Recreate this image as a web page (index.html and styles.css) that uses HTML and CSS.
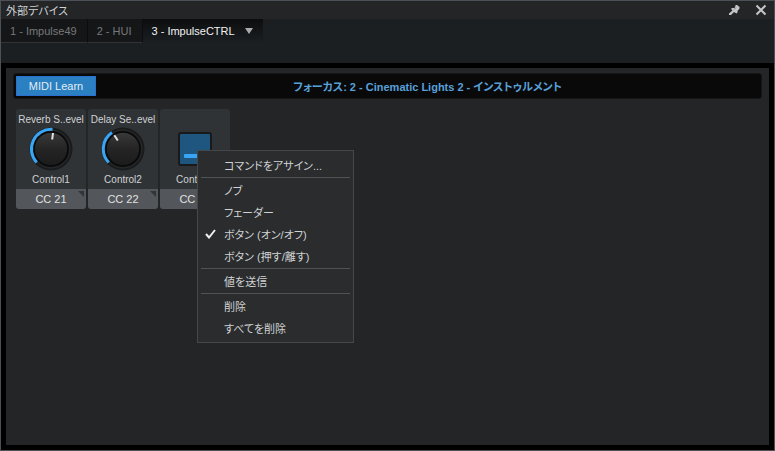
FILE: index.html
```html
<!DOCTYPE html>
<html lang="ja">
<head>
    <meta charset="UTF-8">
    <meta name="viewport" content="width=device-width, initial-scale=1.0">
    <title>外部デバイス</title>
    <link rel="stylesheet" href="styles.css">
</head>
<body>
    <div class="window">
        <header class="title-bar">
            <h1>外部デバイス</h1>
            <button class="icon-btn" aria-label="Pin">
                <svg width="12" height="12" viewBox="0 0 12 12">
                    <path d="M7.500 1H9l2.500 2v1.500L9.500 7v1.500L8.500 9.500 6 8 3 11H1v-1.500L4.500 6.500 3 5l1-1h2.500L7.500 2z" fill="#c4c6c8"/>
                    <path d="M6 5.500L8 3.500" stroke="#77797b" stroke-width="1"/>
                </svg>
            </button>
            <button class="icon-btn" aria-label="Close">
                <svg width="12" height="12" viewBox="0 0 12 12">
                    <path d="M1.500 1.500l9 9M10.500 1.500l-9 9" stroke="#c4c6c8" stroke-width="2"/>
                </svg>
            </button>
        </header>

        <nav class="tabs">
            <button class="tab">1 - Impulse49</button>
            <button class="tab">2 - HUI</button>
            <button class="tab active">3 - ImpulseCTRL
                <svg width="8" height="6" viewBox="0 0 8 6"><path d="M0 0h8L4 6z" fill="#a9abad"/></svg>
            </button>
        </nav>

        <main class="panel">
            <div class="focus-bar">
                <button class="learn-btn">MIDI Learn</button>
                <p class="focus-text">フォーカス: 2 - Cinematic Lights 2 - インストゥルメント</p>
            </div>

            <div class="controls">
                <div class="control">
                    <span class="param">Reverb S..evel</span>
                    <div class="knob">
                        <svg width="44" height="44" viewBox="-22 -22 44 44">
                            <defs>
                                <linearGradient id="cap" x1="0" y1="0" x2="0" y2="1">
                                    <stop offset="0" stop-color="#3a3a3a"/>
                                    <stop offset="0.500" stop-color="#242424"/>
                                    <stop offset="1" stop-color="#1b1b1b"/>
                                </linearGradient>
                            </defs>
                            <circle r="21.500" fill="#1a1b1c"/>
                            <circle r="19" fill="none" stroke="#2a2b2c"/>
                            <circle r="17" fill="url(#cap)" stroke="#080808" stroke-width="1.500"/>
                            <path d="M-14.300 13.500A19.700 19.700 0 0 1 1.500 -19.600" fill="none" stroke="#38a5f5" stroke-width="3"/>
                            <path d="M2 -16L1.200 -9.500" stroke="#e4e4e4" stroke-width="2"/>
                        </svg>
                        <input type="range" id="control1" min="0" max="127" value="66">
                    </div>
                    <label class="name" for="control1">Control1</label>
                    <button class="cc">CC 21</button>
                </div>

                <div class="control">
                    <span class="param">Delay Se..evel</span>
                    <div class="knob">
                        <svg width="44" height="44" viewBox="-22 -22 44 44">
                            <circle r="21.500" fill="#1a1b1c"/>
                            <circle r="19" fill="none" stroke="#2a2b2c"/>
                            <circle r="17" fill="url(#cap)" stroke="#080808" stroke-width="1.500"/>
                            <path d="M-14.300 13.500A19.700 19.700 0 0 1 -11 -16.400" fill="none" stroke="#38a5f5" stroke-width="3"/>
                            <path d="M-8.700 -13.700L-5.200 -8.500" stroke="#e4e4e4" stroke-width="2"/>
                        </svg>
                        <input type="range" id="control2" min="0" max="127" value="46">
                    </div>
                    <label class="name" for="control2">Control2</label>
                    <button class="cc">CC 22</button>
                </div>

                <div class="control">
                    <span class="param"></span>
                    <div class="knob">
                        <button class="pad" id="control3"><span class="pad-light"></span></button>
                    </div>
                    <label class="name" for="control3">Control3</label>
                    <button class="cc">CC 23</button>

                    <!-- Right click menu for the button control -->
                    <div class="menu" role="menu">
                        <button role="menuitem">コマンドをアサイン...</button>
                        <hr>
                        <button role="menuitem">ノブ</button>
                        <button role="menuitem">フェーダー</button>
                        <button role="menuitem">
                            <svg class="check" width="11" height="10" viewBox="0 0 11 10"><path d="M1 5l3 3.500L10 1" fill="none" stroke="#f0f0f0" stroke-width="2"/></svg>
                            ボタン (オン/オフ)
                        </button>
                        <button role="menuitem">ボタン (押す/離す)</button>
                        <hr>
                        <button role="menuitem">値を送信</button>
                        <hr>
                        <button role="menuitem">削除</button>
                        <button role="menuitem">すべてを削除</button>
                    </div>
                </div>
            </div>
        </main>
    </div>
</body>
</html>
```
FILE: styles.css
```css
* {
    box-sizing: border-box;
}
body {
    margin: 0;
    background-color: #000;
    color: #d0d2d4;
    font-family: "Liberation Sans", "Noto Sans CJK JP", sans-serif;
    font-size: 11px;
}
button {
    padding: 0;
    border: none;
    background: none;
    color: inherit;
    font: inherit;
}
svg {
    display: block;
}
.window {
    display: flex;
    flex-direction: column;
    min-height: 100vh;
    border: 1px solid #4b5157;
    background-color: #000;
}

/* Title bar */
.title-bar {
    display: flex;
    align-items: center;
    gap: 15px;
    height: 18px;
    padding: 0 7px 0 5px;
    background-color: #232527;
}
.title-bar h1 {
    flex: 1;
    margin: 0;
    padding-top: 2px;
    font-size: 11px;
    font-weight: normal;
    line-height: 18px;
    font-feature-settings: "palt";
}

/* Device tabs */
.tabs {
    display: flex;
    align-items: flex-start;
    height: 44px;
    background-color: #1b1f22;
}
.tab {
    display: flex;
    align-items: center;
    gap: 10px;
    height: 24px;
    padding: 0 10px 0 9px;
    border-right: 1px solid #0b0c0d;
    border-bottom: 1px solid #303335;
    background-color: #151617;
    color: #77797b;
}
.tab.active {
    border: none;
    background: linear-gradient(#0c0d0e, #1b1f22);
    color: #f2f2f2;
}

.panel {
    flex: 1;
    margin: 5px;
    padding: 5px 7px;
    background-color: #232527;
}
.focus-bar {
    display: flex;
    align-items: center;
    height: 26px;
    padding: 0 2px;
    border: 1px solid #151617;
    border-radius: 3px;
    background-color: #090909;
}
.learn-btn {
    width: 80px;
    height: 20px;
    border: 1px solid #2b6fd0;
    background-color: #2a80c0;
    color: #e4edf4;
}
.focus-text {
    flex: 1;
    margin: 0;
    color: #58a0da;
    font-weight: bold;
    text-align: center;
    font-feature-settings: "palt";
}

/* Control cards */
.controls {
    display: flex;
    gap: 2px;
    padding: 10px 3px;
}
.control {
    position: relative;
    display: flex;
    flex-direction: column;
    align-items: center;
    width: 70px;
    border-radius: 3px;
    background-color: #2f3336;
    font-size: 10px;
}
.param {
    height: 18px;
    line-height: 22px;
    white-space: nowrap;
}
.knob {
    position: relative;
    display: flex;
    align-items: center;
    justify-content: center;
    width: 44px;
    height: 44px;
}
.knob input {
    position: absolute;
    inset: 0;
    width: 100%;
    height: 100%;
    margin: 0;
    opacity: 0;
}
.name {
    height: 18px;
    line-height: 18px;
}
.cc {
    position: relative;
    width: 100%;
    height: 20px;
    border-radius: 0 0 3px 3px;
    background-color: #53565a;
    color: #e2e3e4;
    font-size: 11px;
}
.cc::after {
    content: "";
    position: absolute;
    top: 2px;
    right: 2px;
    border-top: 6px solid #323537;
    border-left: 6px solid transparent;
}
.pad {
    display: flex;
    align-items: flex-end;
    justify-content: center;
    width: 34px;
    height: 34px;
    padding-bottom: 6px;
    border: 2px solid #17191b;
    border-radius: 3px;
    background-color: #1e5680;
}
.pad-light {
    width: 22px;
    height: 4px;
    border-radius: 1px;
    background-color: #38a5f5;
}

/* Context menu */
.menu {
    position: absolute;
    top: 41px;
    left: 37px;
    z-index: 10;
    width: 157px;
    padding: 3px;
    border: 1px solid #45484a;
    background-color: #2a2c2e;
}
.menu button {
    position: relative;
    display: block;
    width: 100%;
    height: 22px;
    padding-left: 23px;
    font-size: 11px;
    line-height: 24px;
    text-align: left;
    white-space: nowrap;
    font-feature-settings: "palt";
}
.menu hr {
    height: 1px;
    margin: 1px 0;
    border: none;
    background-color: #505356;
}
.check {
    position: absolute;
    top: 6px;
    left: 4px;
}
```
